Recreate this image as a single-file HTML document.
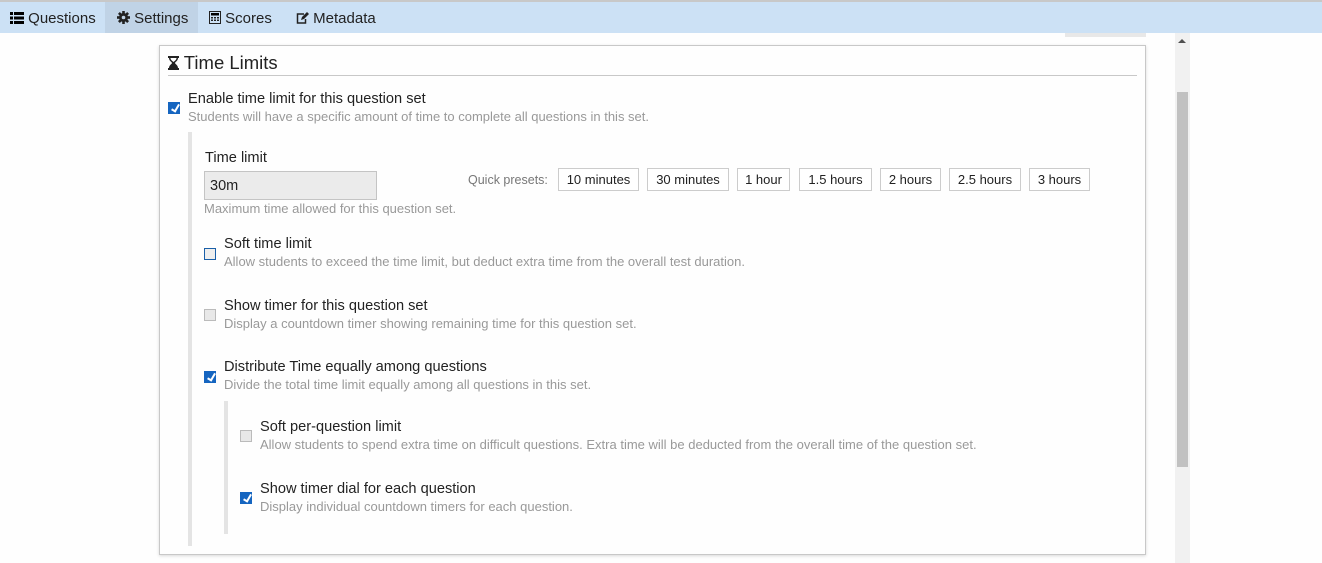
<!DOCTYPE html>
<html><head><meta charset="utf-8"><style>
*{box-sizing:border-box;margin:0;padding:0}
body{width:1322px;height:563px;background:#fefefe;font-family:"Liberation Sans",sans-serif;position:relative;overflow:hidden;color:#222}
.abs{position:absolute;white-space:nowrap}
.top{position:absolute;left:0;top:0;width:1322px;height:33px;background:#cce1f5;border-top:2px solid #c8c8c8}
.tab{position:absolute;top:3px;height:31px;line-height:31px;font-size:15px;color:#222}
.panel{position:absolute;left:159px;top:45px;width:987px;height:510px;border:1px solid #c8c8c8;box-shadow:0 1px 3px rgba(0,0,0,.15);background:#fefefe}
.cb{position:absolute;width:12px;height:12px;border:1px solid #bbb;background:#e8e8e8}
.cb.on{background:#1565c0;border-color:#1565c0}
.cb.on::after{content:"";position:absolute;left:3.5px;top:0px;width:3px;height:7px;border:solid #fff;border-width:0 2px 2px 0;transform:rotate(30deg)}
.cb.blue{border-color:#1a5fa8;background:#eee}
.lbl{font-size:14.6px;color:#222}
.desc{font-size:13px;color:#999}
.btn{position:absolute;top:168px;height:23px;border:1px solid #ccc;font-size:13px;line-height:21px;text-align:center;color:#222;background:#fff}
</style></head><body>
<div class="top"></div>
<div class="abs" style="left:105px;top:2px;width:93px;height:31px;background:#c0d3e6"></div>
<div class="tab" style="left:10px"><svg width="14" height="12" viewBox="0 0 14 12" style="vertical-align:-1px"><rect x="0" y="0" width="3" height="3"/><rect x="4" y="0" width="10" height="3"/><rect x="0" y="4.5" width="3" height="3"/><rect x="4" y="4.5" width="10" height="3"/><rect x="0" y="9" width="3" height="3"/><rect x="4" y="9" width="10" height="3"/></svg> Questions</div>
<div class="tab" style="left:117px"><svg width="13" height="13" viewBox="0 0 13 13" style="vertical-align:-1px"><g fill="#222"><circle cx="6.5" cy="6.5" r="4.5"/><rect x="5.2" y="0" width="2.6" height="13"/><rect x="0" y="5.2" width="13" height="2.6"/><rect x="5.2" y="0" width="2.6" height="13" transform="rotate(45 6.5 6.5)"/><rect x="5.2" y="0" width="2.6" height="13" transform="rotate(-45 6.5 6.5)"/></g><circle cx="6.5" cy="6.5" r="1.8" fill="#c0d3e6"/></svg> Settings</div>
<div class="tab" style="left:209px"><svg width="12" height="13" viewBox="0 0 12 13" style="vertical-align:-1px"><rect x="0.5" y="0.5" width="11" height="12" fill="none" stroke="#222"/><rect x="2" y="2" width="8" height="2.5"/><g fill="#222"><rect x="2" y="6" width="2" height="1.5"/><rect x="5" y="6" width="2" height="1.5"/><rect x="8" y="6" width="2" height="1.5"/><rect x="2" y="8.5" width="2" height="1.5"/><rect x="5" y="8.5" width="2" height="1.5"/><rect x="8" y="8.5" width="2" height="1.5"/></g></svg> Scores</div>
<div class="tab" style="left:296px"><svg width="13" height="12" viewBox="0 0 13 12" style="vertical-align:-1px"><path d="M8 2H1.5v9h8V7" fill="none" stroke="#222" stroke-width="1.5"/><path d="M5 8l1-3 5-5 2 2-5 5z" fill="#222"/></svg> Metadata</div>
<div class="abs" style="left:1065px;top:33px;width:81px;height:4px;background:#e8e8e8"></div>
<div class="abs" style="left:1175px;top:33px;width:15px;height:530px;background:#f1f1f1"></div>
<div class="abs" style="left:1177px;top:92px;width:11px;height:375px;background:#c1c1c1"></div>
<div class="abs" style="left:1178px;top:39px;width:0;height:0;border-left:4px solid transparent;border-right:4px solid transparent;border-bottom:4px solid #505050"></div>
<div class="panel"></div>
<div class="abs" style="left:168px;top:52px;font-size:18.5px;color:#222"><svg width="11" height="14" viewBox="0 0 11 14" style="vertical-align:-1px"><path d="M0 0h11v2h-1c0 3-3 4-3 5s3 2 3 5h1v2H0v-2h1c0-3 3-4 3-5S1 5 1 2H0z" fill="#222"/><path d="M2.5 2h6c0 2-2 3-3 4-1-1-3-2-3-4z" fill="#fff"/></svg> Time Limits</div>
<div class="abs" style="left:168px;top:75px;width:969px;height:1px;background:#c8c8c8"></div>
<div class="cb on" style="left:168px;top:102px"></div>
<div class="abs lbl" style="left:188px;top:91px">Enable time limit for this question set</div>
<div class="abs desc" style="left:188px;top:109px">Students will have a specific amount of time to complete all questions in this set.</div>
<div class="abs" style="left:188px;top:132px;width:4px;height:414px;background:#e4e4e4"></div>
<div class="abs lbl" style="left:205px;top:150px">Time limit</div>
<div class="abs" style="left:204px;top:171px;width:173px;height:29px;background:#ebebeb;border:1px solid #c4c4c4;font-size:14.5px;line-height:29px;padding-left:5px">30m</div>
<div class="abs desc" style="left:204px;top:201px">Maximum time allowed for this question set.</div>
<div class="abs" style="left:468px;top:173px;font-size:12.5px;color:#777">Quick presets:</div>
<div class="btn" style="left:558px;width:81px">10 minutes</div>
<div class="btn" style="left:647px;width:82px">30 minutes</div>
<div class="btn" style="left:737px;width:53px">1 hour</div>
<div class="btn" style="left:799px;width:73px">1.5 hours</div>
<div class="btn" style="left:880px;width:61px">2 hours</div>
<div class="btn" style="left:949px;width:72px">2.5 hours</div>
<div class="btn" style="left:1029px;width:61px">3 hours</div>
<div class="cb blue" style="left:204px;top:248px"></div>
<div class="abs lbl" style="left:224px;top:236px">Soft time limit</div>
<div class="abs desc" style="left:224px;top:254px">Allow students to exceed the time limit, but deduct extra time from the overall test duration.</div>
<div class="cb" style="left:204px;top:309px"></div>
<div class="abs lbl" style="left:224px;top:298px">Show timer for this question set</div>
<div class="abs desc" style="left:224px;top:316px">Display a countdown timer showing remaining time for this question set.</div>
<div class="cb on" style="left:204px;top:371px"></div>
<div class="abs lbl" style="left:224px;top:359px">Distribute Time equally among questions</div>
<div class="abs desc" style="left:224px;top:377px">Divide the total time limit equally among all questions in this set.</div>
<div class="abs" style="left:224px;top:401px;width:4px;height:133px;background:#e4e4e4"></div>
<div class="cb" style="left:240px;top:430px"></div>
<div class="abs lbl" style="left:260px;top:419px">Soft per-question limit</div>
<div class="abs desc" style="left:260px;top:437px">Allow students to spend extra time on difficult questions. Extra time will be deducted from the overall time of the question set.</div>
<div class="cb on" style="left:240px;top:492px"></div>
<div class="abs lbl" style="left:260px;top:481px">Show timer dial for each question</div>
<div class="abs desc" style="left:260px;top:499px">Display individual countdown timers for each question.</div>
</body></html>
